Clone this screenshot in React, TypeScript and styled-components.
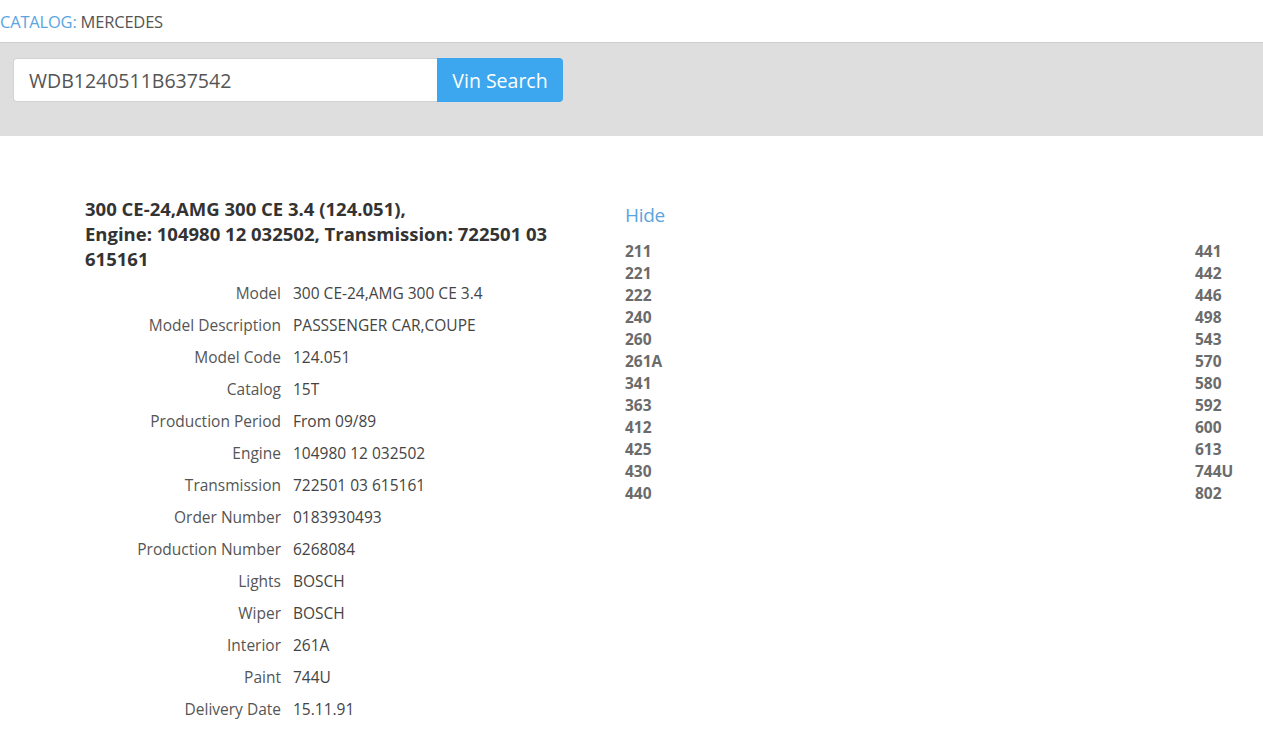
import React from 'react';
import styled, { createGlobalStyle } from 'styled-components';

const GlobalStyle = createGlobalStyle`
  body {
    margin: 0;
    background: #fff;
    font-family: 'Open Sans', 'Noto Sans', sans-serif;
    color: #333;
  }
`;

const details: Array<[string, string]> = [
  ['Model', '300 CE-24,AMG 300 CE 3.4'],
  ['Model Description', 'PASSSENGER CAR,COUPE'],
  ['Model Code', '124.051'],
  ['Catalog', '15T'],
  ['Production Period', 'From 09/89'],
  ['Engine', '104980 12 032502'],
  ['Transmission', '722501 03 615161'],
  ['Order Number', '0183930493'],
  ['Production Number', '6268084'],
  ['Lights', 'BOSCH'],
  ['Wiper', 'BOSCH'],
  ['Interior', '261A'],
  ['Paint', '744U'],
  ['Delivery Date', '15.11.91'],
];

const leftCodes = ['211', '221', '222', '240', '260', '261A', '341', '363', '412', '425', '430', '440'];
const rightCodes = ['441', '442', '446', '498', '543', '570', '580', '592', '600', '613', '744U', '802'];

export default function App() {
  return (
    <>
      <GlobalStyle />
      <Breadcrumb>
        <CrumbLink>CATALOG:</CrumbLink> MERCEDES
      </Breadcrumb>
      <SearchBar>
        <SearchInput defaultValue="WDB1240511B637542" />
        <SearchButton>Vin Search</SearchButton>
      </SearchBar>
      <Content>
        <InfoColumn>
          <Title>
            300 CE-24,AMG 300 CE 3.4 (124.051),
            <br />
            Engine: 104980 12 032502, Transmission: 722501 03 615161
          </Title>
          <DetailTable>
            {details.map(([label, value]) => (
              <React.Fragment key={label}>
                <Label>{label}</Label>
                <Value>{value}</Value>
              </React.Fragment>
            ))}
          </DetailTable>
        </InfoColumn>
        <CodesColumn>
          <HideLink>Hide</HideLink>
          <CodesGrid>
            <CodeList>
              {leftCodes.map((c) => (
                <Code key={c}>{c}</Code>
              ))}
            </CodeList>
            <CodeList>
              {rightCodes.map((c) => (
                <Code key={c}>{c}</Code>
              ))}
            </CodeList>
          </CodesGrid>
        </CodesColumn>
      </Content>
    </>
  );
}

const Breadcrumb = styled.div`
  height: 42px;
  line-height: 43px;
  font-size: 16.5px;
  color: #555;
  letter-spacing: -0.2px;
`;

const CrumbLink = styled.span`
  color: #5aa5e0;
`;

const SearchBar = styled.div`
  display: flex;
  align-items: flex-start;
  height: 94px;
  box-sizing: border-box;
  background: #dedede;
  border-top: 1px solid #cecece;
  padding: 15px 13px 0;
`;

const SearchInput = styled.input`
  width: 424px;
  height: 44px;
  box-sizing: border-box;
  border: 1px solid #d3d3d3;
  border-right: none;
  border-radius: 4px 0 0 4px;
  padding: 0 15px;
  font-family: 'Open Sans', 'Noto Sans', sans-serif;
  font-size: 19.5px;
  color: #555;
  outline: none;
  background: #fff;
`;

const SearchButton = styled.button`
  width: 126px;
  height: 44px;
  border: none;
  border-radius: 0 4px 4px 0;
  background: #3ca7ee;
  color: #fff;
  font-family: 'Open Sans', 'Noto Sans', sans-serif;
  font-size: 19.5px;
  cursor: pointer;
`;

const Content = styled.div`
  display: flex;
  padding: 60px 28px 0 85px;
`;

const InfoColumn = styled.div`
  width: 480px;
  flex-shrink: 0;
`;

const Title = styled.h4`
  width: 470px;
  margin: 0 0 6px;
  font-size: 18.5px;
  font-weight: 700;
  line-height: 25px;
  color: #333;
`;

const DetailTable = styled.div`
  display: grid;
  grid-template-columns: 196px 1fr;
  column-gap: 12px;
  grid-auto-rows: 32px;
  align-items: center;
  font-size: 15.5px;
  color: #444;
`;

const Label = styled.div`
  text-align: right;
  color: #555;
`;

const Value = styled.div`
  color: #444;
`;

const CodesColumn = styled.div`
  flex: 1;
  margin-left: 60px;
`;

const HideLink = styled.a`
  display: block;
  margin-top: 7px;
  margin-bottom: 13px;
  font-size: 19px;
  line-height: 24px;
  color: #5aa5e0;
  letter-spacing: -0.3px;
  cursor: pointer;
`;

const CodesGrid = styled.div`
  display: grid;
  grid-template-columns: 1fr 40px;
`;

const CodeList = styled.div`
  display: flex;
  flex-direction: column;
`;

const Code = styled.div`
  font-size: 15.5px;
  font-weight: 700;
  line-height: 22px;
  color: #6b6b6b;
`;
